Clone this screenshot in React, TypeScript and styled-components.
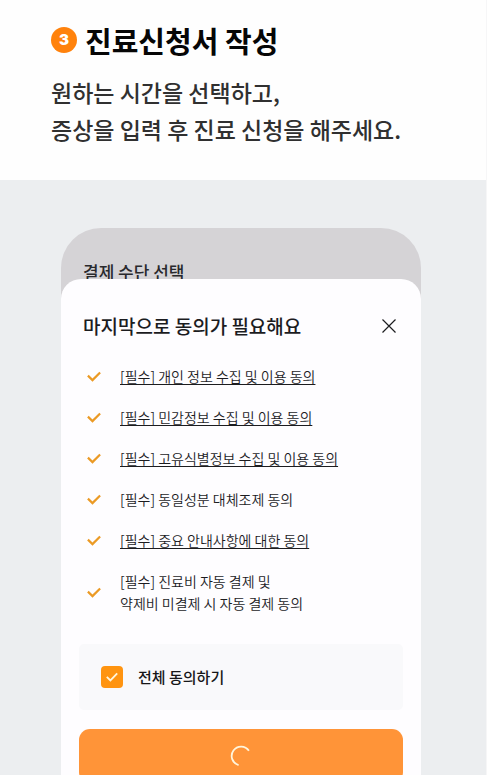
import React from "react";
import styled, { createGlobalStyle, css } from "styled-components";

const GlobalStyle = createGlobalStyle`
  *, *::before, *::after { box-sizing: border-box; }
  body {
    margin: 0;
    background: #eceef0;
    color: #1c1c1f;
    font-family: "Noto Sans CJK KR", "Noto Sans", sans-serif;
  }
  h1, h2, p, ul { margin: 0; padding: 0; }
`;

const Page = styled.div`
  display: flex;
  flex-direction: column;
  height: 100vh;
  overflow: hidden;
  border-right: 1px solid #f6f6f7;
`;

const Intro = styled.header`
  flex: none;
  padding: 20px 48px 32px 51px;
  background: #fefefe;
`;

const Heading = styled.h1`
  display: flex;
  align-items: center;
  gap: 8px;
  color: #060606;
  font-size: 29px;
  font-weight: 700;
  line-height: 40px;
`;

const StepNumber = styled.span`
  display: grid;
  place-items: center;
  flex: none;
  width: 26px;
  height: 26px;
  border-radius: 50%;
  background: #ff820c;
  color: #fff;
  font-family: Inter, sans-serif;
  font-size: 15px;
  font-weight: 900;
  line-height: 26px;
`;

const Description = styled.p`
  margin-top: 14px;
  color: #303030;
  font-size: 23px;
  font-weight: 500;
  line-height: 37px;
  white-space: nowrap;
`;

const Stage = styled.main`
  display: flex;
  flex: none;
  flex-direction: column;
  padding: 48px 65px 0 61px;
`;

const Phone = styled.section`
  border-radius: 40px 40px 0 0;
  background: #d5d3d6;
`;

const CoveredScreen = styled.div`
  height: 51px;
  padding: 32px 22px 0;
  overflow: hidden;
  color: #29292d;
  font-size: 17px;
  font-weight: 500;
  line-height: 24px;
`;

const Sheet = styled.form`
  display: flex;
  flex-direction: column;
  padding: 32px 18px 0;
  border-radius: 20px 20px 0 0;
  background: #fefdff;
`;

const SheetHeader = styled.div`
  display: flex;
  align-items: center;
  justify-content: space-between;
  padding: 0 4px;
`;

const SheetTitle = styled.h2`
  font-size: 19px;
  font-weight: 500;
  line-height: 30px;
`;

const CloseButton = styled.button`
  display: grid;
  place-items: center;
  width: 20px;
  height: 20px;
  padding: 0;
  border: 0;
  background: none;
  color: #1c1c1f;
`;

const ConsentList = styled.ul`
  display: flex;
  flex-direction: column;
  gap: 19px;
  margin-top: 24px;
  padding: 0 8px;
  list-style: none;
`;

const ConsentRow = styled.li`
  display: flex;
  align-items: center;
  gap: 19px;
`;

const consentText = css`
  color: #1c1c1f;
  font-size: 14px;
  font-weight: 350;
  line-height: 22px;
  white-space: pre-line;
`;

const ConsentLink = styled.a`
  ${consentText}
  text-decoration: underline;
  text-decoration-thickness: 1px;
  text-underline-offset: 2px;
`;

const ConsentLabel = styled.label`
  ${consentText}
`;

const TickBox = styled.span<{ $filled?: boolean }>`
  display: grid;
  place-items: center;
  flex: none;
  width: ${({ $filled }) => ($filled ? 22 : 14)}px;
  height: 22px;
  border-radius: 4px;
  background: ${({ $filled }) => ($filled ? "#ff9410" : "transparent")};
  color: ${({ $filled }) => ($filled ? "#fff6dc" : "#eb9a25")};

  input, svg { grid-area: 1 / 1; }
  input {
    width: 100%;
    height: 100%;
    margin: 0;
    appearance: none;
  }
  svg { pointer-events: none; visibility: hidden; }
  input:checked + svg { visibility: visible; }
`;

const AgreeAll = styled.div`
  display: flex;
  align-items: center;
  gap: 15px;
  height: 66px;
  margin-top: 30px;
  padding: 0 22px;
  border-radius: 5px;
  background: #f9f9fb;
`;

const AgreeAllLabel = styled.label`
  color: #161618;
  font-size: 15px;
  font-weight: 500;
  line-height: 24px;
`;

const SubmitButton = styled.button`
  display: grid;
  place-items: center;
  height: 54px;
  margin-top: 19px;
  border: 0;
  border-radius: 11px;
  background: #ff9438;
  color: #fff5dc;
`;

function Tick({ id, label, filled }: { id: string; label?: string; filled?: boolean }) {
  return (
    <TickBox $filled={filled}>
      <input type="checkbox" id={id} aria-label={label} defaultChecked />
      {filled ? (
        <svg width="12" height="10" viewBox="0 0 12 10" fill="none" aria-hidden="true">
          <path d="M.8 4.8 4.4 8.4 11.2 1.4" stroke="currentColor" strokeWidth="1.8" />
        </svg>
      ) : (
        <svg width="14" height="12" viewBox="0 0 14 12" fill="none" aria-hidden="true">
          <path d="M.9 5.6 5.5 10.1 13.1 2.4" stroke="currentColor" strokeWidth="2.2" />
        </svg>
      )}
    </TickBox>
  );
}

const consents = [
  { id: "privacy", text: "[필수] 개인 정보 수집 및 이용 동의", linked: true },
  { id: "sensitive", text: "[필수] 민감정보 수집 및 이용 동의", linked: true },
  { id: "identity", text: "[필수] 고유식별정보 수집 및 이용 동의", linked: true },
  { id: "substitute", text: "[필수] 동일성분 대체조제 동의", linked: false },
  { id: "notice", text: "[필수] 중요 안내사항에 대한 동의", linked: true },
  { id: "autopay", text: "[필수] 진료비 자동 결제 및\n약제비 미결제 시 자동 결제 동의", linked: false },
];

export default function App() {
  return (
    <>
      <GlobalStyle />
      <Page>
        <Intro>
          <Heading>
            <StepNumber>3</StepNumber>
            진료신청서 작성
          </Heading>
          <Description>
            원하는 시간을 선택하고,
            <br />
            증상을 입력 후 진료 신청을 해주세요.
          </Description>
        </Intro>
        <Stage>
          <Phone>
            <CoveredScreen>결제 수단 선택</CoveredScreen>
            <Sheet onSubmit={(event) => event.preventDefault()}>
              <SheetHeader>
                <SheetTitle>마지막으로 동의가 필요해요</SheetTitle>
                <CloseButton type="button" aria-label="닫기">
                  <svg width="14" height="14" viewBox="0 0 14 14" fill="none" aria-hidden="true">
                    <path d="M.5.5 13.5 13.5M13.5.5.5 13.5" stroke="currentColor" strokeWidth="1.2" />
                  </svg>
                </CloseButton>
              </SheetHeader>
              <ConsentList>
                {consents.map(({ id, text, linked }) => (
                  <ConsentRow key={id}>
                    <Tick id={id} label={linked ? text : undefined} />
                    {linked ? (
                      <ConsentLink href={`#${id}`}>{text}</ConsentLink>
                    ) : (
                      <ConsentLabel htmlFor={id}>{text}</ConsentLabel>
                    )}
                  </ConsentRow>
                ))}
              </ConsentList>
              <AgreeAll>
                <Tick id="agree-all" filled />
                <AgreeAllLabel htmlFor="agree-all">전체 동의하기</AgreeAllLabel>
              </AgreeAll>
              <SubmitButton type="submit" aria-label="처리 중">
                <svg width="22" height="22" viewBox="0 0 22 22" fill="none" aria-hidden="true">
                  <path d="M18.9 5.8A9.4 9.4 0 1 0 8.6 20.1" stroke="currentColor" strokeWidth="1.8" />
                </svg>
              </SubmitButton>
            </Sheet>
          </Phone>
        </Stage>
      </Page>
    </>
  );
}
